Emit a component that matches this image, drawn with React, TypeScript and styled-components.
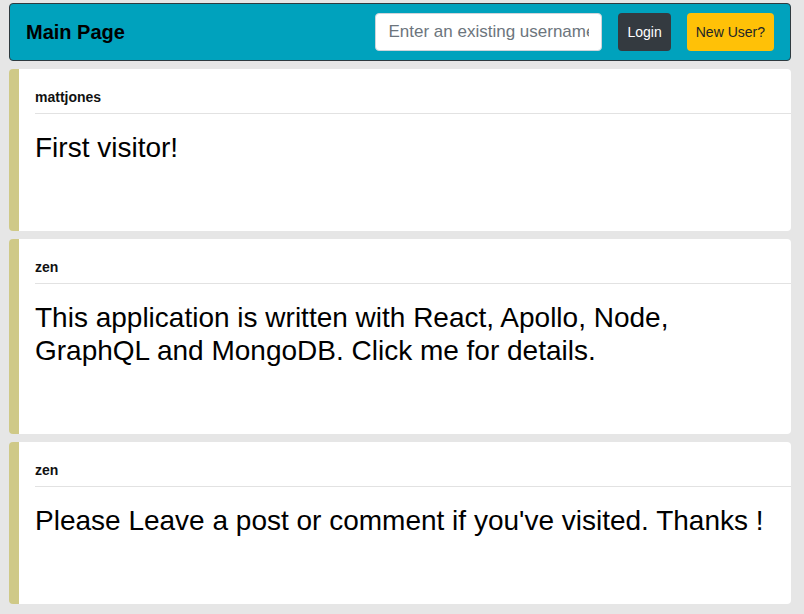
import React from "react";
import styled, { createGlobalStyle } from "styled-components";

const Global = createGlobalStyle`
  html, body { margin: 0; padding: 0; background: #e6e6e6; }
  body { font-family: "Liberation Sans", Arial, sans-serif; }
  * { box-sizing: border-box; }
`;

const Page = styled.div`
  padding: 3px 13px 10px 9px;
  display: flex;
  flex-direction: column;
  gap: 8px;
`;

const Header = styled.header`
  height: 58px;
  background: #00a2bd;
  border: 1px solid #2f3a3f;
  border-radius: 4px;
  display: flex;
  align-items: center;
  padding: 0 16px 0 16px;
`;

const Title = styled.h1`
  margin: 0;
  flex: 1;
  font-size: 20px;
  font-weight: 700;
  color: #000;
`;

const Input = styled.input`
  width: 227px;
  height: 38px;
  border: 1px solid #ced4da;
  border-radius: 4px;
  padding: 0 12px;
  font-family: "Liberation Sans", Arial, sans-serif;
  font-size: 17px;
  color: #495057;
  background: #fff;
  margin-right: 16px;
  &::placeholder { color: #6c757d; }
`;

const Button = styled.button<{ $variant: "dark" | "warning" }>`
  height: 38px;
  border: none;
  border-radius: 4px;
  padding: 0 9px;
  font-family: "Liberation Sans", Arial, sans-serif;
  font-size: 14px;
  background: ${(p) => (p.$variant === "dark" ? "#343a40" : "#ffc107")};
  color: ${(p) => (p.$variant === "dark" ? "#fff" : "#212529")};
  margin-left: ${(p) => (p.$variant === "warning" ? "16px" : "0")};
`;

const Card = styled.article`
  background: #fff;
  border-left: 10px solid #cfc987;
  border-radius: 4px;
  padding: 20px 0 67px 16px;
`;

const Author = styled.div`
  font-size: 14px;
  font-weight: 700;
  color: #111;
  line-height: 16px;
  padding-bottom: 8px;
  border-bottom: 1px solid #e2e2e2;
`;

const Message = styled.p`
  margin: 17px 0 0;
  font-size: 28px;
  line-height: 33px;
  color: #000;
  padding-right: 16px;
`;

const posts = [
  { author: "mattjones", text: "First visitor!" },
  {
    author: "zen",
    text: "This application is written with React, Apollo, Node, GraphQL and MongoDB. Click me for details.",
  },
  { author: "zen", text: "Please Leave a post or comment if you've visited. Thanks !" },
];

export default function App() {
  return (
    <>
      <Global />
      <Page>
        <Header>
          <Title>Main Page</Title>
          <Input placeholder="Enter an existing username" />
          <Button $variant="dark">Login</Button>
          <Button $variant="warning">New User?</Button>
        </Header>
        {posts.map((p, i) => (
          <Card key={i}>
            <Author>{p.author}</Author>
            <Message>{p.text}</Message>
          </Card>
        ))}
      </Page>
    </>
  );
}
